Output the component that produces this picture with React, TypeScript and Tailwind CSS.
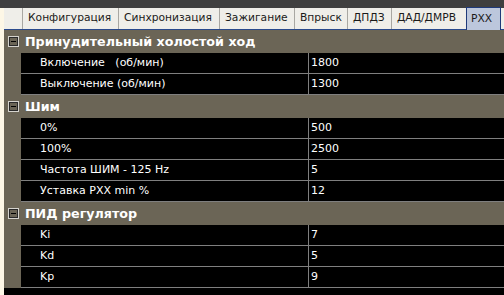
const tabs = [
  { name: "Конфигурация", w: "w-[96px]" },
  { name: "Синхронизация", w: "w-[101px]" },
  { name: "Зажигание", w: "w-[75px]" },
  { name: "Впрыск", w: "w-[53px]" },
  { name: "ДПДЗ", w: "w-[44px]" },
  { name: "ДАД/ДМРВ", w: "w-[75px]" },
];

const groups = [
  {
    title: "Принудительный холостой ход",
    rows: [
      ["Включение   (об/мин)", "1800"],
      ["Выключение (об/мин)", "1300"],
    ],
  },
  {
    title: "Шим",
    rows: [
      ["0%", "500"],
      ["100%", "2500"],
      ["Частота ШИМ - 125 Hz", "5"],
      ["Уставка РХХ min %", "12"],
    ],
  },
  {
    title: "ПИД регулятор",
    rows: [
      ["Ki", "7"],
      ["Kd", "5"],
      ["Kp", "9"],
    ],
  },
];

function Collapse() {
  return (
    <div className="w-[11px] h-[11px] border border-[#d4d2cc] bg-[#6b6556] shadow-[inset_1px_1px_0_#2a2a2a,inset_-1px_-1px_0_#2a2a2a] flex items-center justify-center">
      <div className="w-[5px] h-[1px] bg-black" />
    </div>
  );
}

export default function App() {
  return (
    <div className="w-[504px] h-[295px] overflow-hidden bg-black flex flex-col font-['DejaVu_Sans',sans-serif] text-[11px]">
      <div className="h-[8px] bg-[#3f3f3f] shrink-0" />
      <div className="flex flex-1">
        <div className="w-[4px] bg-[#fdf7e6] shrink-0" />
        <div className="flex-1 flex flex-col">
          <div className="h-[22px] bg-[#efeee9] border-b border-[#2a4a8c] flex items-end pl-[18px] shrink-0">
            {tabs.map((t) => (
              <div
                key={t.name}
                className={`${t.w} h-[21px] border-l border-[#a8a7a2] pl-[5px] flex items-center text-[10.7px] text-[#1a1a1a] whitespace-nowrap`}
              >
                {t.name}
              </div>
            ))}
            <div className="w-[35px] h-[23px] -mb-[1px] border border-b-0 border-[#1f3a7a] bg-[#bcc7dc] pl-[4px] flex items-center text-[10.7px] text-[#1a1a1a]">
              РХХ
            </div>
          </div>
          {groups.map((g) => (
            <div key={g.title}>
              <div className="h-[23px] bg-[#6b6556] flex items-center pl-[4px] gap-[6px]">
                <Collapse />
                <span className="text-white font-bold text-[12.7px] whitespace-nowrap">{g.title}</span>
              </div>
              {g.rows.map(([label, value]) => (
                <div key={label} className="h-[21px] flex">
                  <div className="w-[17px] bg-[#6b6556] shrink-0" />
                  <div className="flex-1 flex border-b border-[#7f7f7f] text-white">
                    <div className="w-[288px] border-r border-[#7f7f7f] pl-[19px] flex items-center whitespace-pre">
                      {label}
                    </div>
                    <div className="flex-1 pl-[2px] flex items-center">{value}</div>
                  </div>
                </div>
              ))}
            </div>
          ))}
        </div>
      </div>
    </div>
  );
}
